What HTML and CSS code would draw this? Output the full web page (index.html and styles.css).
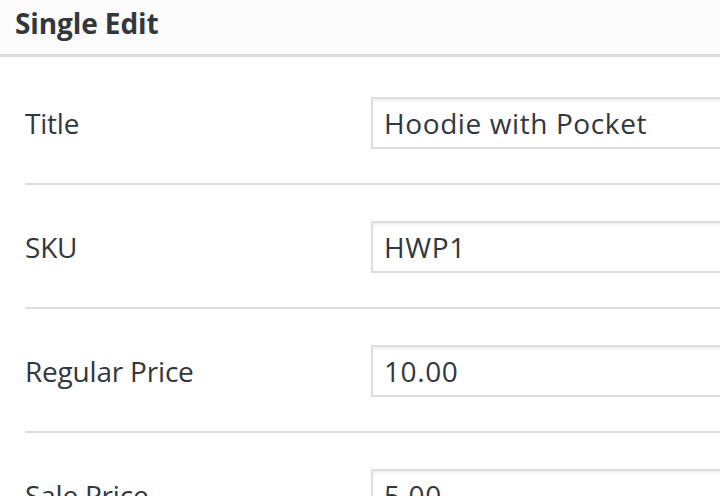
FILE: index.html
```html
<!DOCTYPE html>
<html>
<head>
<meta charset="utf-8">
<link rel="stylesheet" href="styles.css">
</head>
<body>
<div class="panel">
  <div class="panel-header"><h2 class="panel-title">Single Edit</h2></div>
  <div class="fields">
    <div class="row first">
      <label class="label">Title</label>
      <input class="input" type="text" value="Hoodie with Pocket">
    </div>
    <div class="row">
      <label class="label">SKU</label>
      <input class="input" type="text" value="HWP1">
    </div>
    <div class="row">
      <label class="label">Regular Price</label>
      <input class="input" type="text" value="10.00">
    </div>
    <div class="row">
      <label class="label">Sale Price</label>
      <input class="input" type="text" value="5.00">
    </div>
  </div>
</div>
</body>
</html>
```
FILE: styles.css
```css
html, body {
  margin: 0;
  padding: 0;
  background: #fff;
  overflow: hidden;
}
body {
  width: 720px;
  height: 496px;
  font-family: "Open Sans", "Noto Sans", sans-serif;
  color: #333;
}
.panel-header {
  box-sizing: border-box;
  height: 57px;
  background: #fcfcfc;
  border-bottom: 3px solid #dcdcdc;
  display: flex;
  align-items: center;
  padding: 0 0 8px 15px;
}
.panel-title {
  margin: 0;
  font-size: 28px;
  font-weight: 700;
  color: #32373c;
  line-height: 1;
  letter-spacing: -0.1px;
}
.fields {
  padding-left: 25px;
}
.row {
  display: grid;
  grid-template-columns: 346px 420px;
  align-items: center;
  padding: 36px 0 34px;
  border-bottom: 2px solid #dddddd;
}
.row.first {
  padding-top: 40px;
}
.label {
  font-size: 28px;
  color: #32373c;
  line-height: 1;
  letter-spacing: -0.2px;
}
.input {
  box-sizing: border-box;
  height: 52px;
  width: 420px;
  margin: 0;
  border: 2px solid #dddddd;
  box-shadow: inset 0 2px 3px rgba(0,0,0,0.07);
  padding: 0 11px;
  font-family: "Open Sans", "Noto Sans", sans-serif;
  font-size: 28px;
  letter-spacing: 0.6px;
  color: #32373c;
  background: #fff;
  outline: none;
}
```
